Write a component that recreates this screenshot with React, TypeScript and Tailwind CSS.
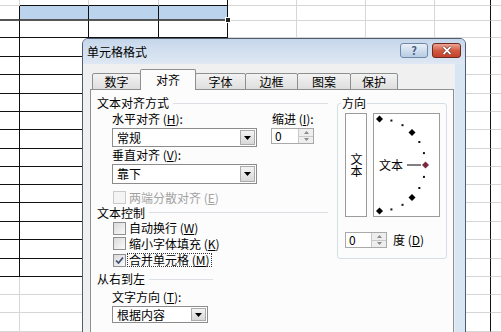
import type { ReactNode } from 'react';

const font = "font-['Noto_Sans_CJK_SC','Noto_Sans',sans-serif]";

// spreadsheet grid behind the dialog
const colW = ['w-[20px]', 'w-[69px]', 'w-[70px]', 'w-[69px]', 'w-[69px]', 'w-[69px]', 'w-[69px]', 'w-[56px]', 'w-[20px]'];
const rowH = [
  'h-[6px]', 'h-[15px]', 'h-[17px]', 'h-[19px]', 'h-[18px]', 'h-[19px]', 'h-[18px]', 'h-[18px]', 'h-[19px]', 'h-[18px]',
  'h-[18px]', 'h-[18px]', 'h-[19px]', 'h-[18px]', 'h-[19px]', 'h-[18px]', 'h-[18px]', 'h-[18px]', 'h-[19px]', 'h-[18px]',
];

function Sheet() {
  return (
    <div className="flex flex-col">
      {rowH.map((h, r) => (
        <div key={r} className={`flex ${h}`}>
          {colW.map((w, c) => {
            const boxed = r >= 1 && r <= 15 && c <= 3;
            const bottom =
              r === 1 && c <= 3
                ? 'border-b-2 border-b-[#555555]'
                : boxed || (r === 0 && c >= 1 && c <= 3)
                  ? 'border-b border-b-[#111111]'
                  : 'border-b border-b-[#d6d6d6]';
            const right = boxed || c === 7 || (c === 3 && r === 0) ? 'border-r border-r-[#111111]' : 'border-r border-r-[#d6d6d6]';
            const fill = r === 1 && c >= 1 && c <= 3 ? 'bg-[#bcd3ee]' : 'bg-white';
            return <div key={c} className={`shrink-0 ${w} ${bottom} ${right} ${fill}`} />;
          })}
        </div>
      ))}
    </div>
  );
}

function DropArrow() {
  return (
    <svg width="7" height="4" viewBox="0 0 7 4">
      <path d="M0 0H7L3.5 4Z" fill="#000" />
    </svg>
  );
}

function Select({ width, height, text }: { width: string; height: string; text: string }) {
  return (
    <div className={`flex ${width} ${height} items-stretch border border-[#8c8c8c] bg-white`}>
      <span className="flex-1 pl-[4px] text-[12px] leading-[16px] self-center">{text}</span>
      <div className="m-[1px] flex w-[15px] items-center justify-center border border-[#ababab] bg-gradient-to-b from-[#f4f4f4] to-[#d8d8d8]">
        <DropArrow />
      </div>
    </div>
  );
}

function Spinner({ width }: { width: string }) {
  return (
    <div className={`flex ${width} h-[16px] items-stretch border border-[#a9a9a9] bg-white`}>
      <span className="flex-1 pl-[3px] text-[12px] leading-[14px]">0</span>
      <div className="flex w-[15px] flex-col border-l border-[#c8c8c8] bg-[#eeeeee]">
        <div className="flex flex-1 items-center justify-center border-b border-[#c8c8c8]">
          <svg width="5" height="3" viewBox="0 0 5 3">
            <path d="M0 3H5L2.5 0Z" fill="#8a8a8a" />
          </svg>
        </div>
        <div className="flex flex-1 items-center justify-center">
          <svg width="5" height="3" viewBox="0 0 5 3">
            <path d="M0 0H5L2.5 3Z" fill="#8a8a8a" />
          </svg>
        </div>
      </div>
    </div>
  );
}

function Checkbox({ checked, disabled, focus, children }: { checked?: boolean; disabled?: boolean; focus?: boolean; children: ReactNode }) {
  return (
    <div className="flex items-center pl-[1px]">
      <div
        className={`flex h-[13px] w-[13px] items-center justify-center border ${
          disabled ? 'border-[#cacaca] bg-[#f4f4f4]' : 'border-[#8f8f8f] bg-gradient-to-br from-[#dadada] to-[#fafafa]'
        }`}
      >
        {checked && (
          <svg width="11" height="11" viewBox="0 0 11 11">
            <path d="M2 5.5L4.5 8L9 2.5" fill="none" stroke="#3d4d70" strokeWidth="1.7" />
          </svg>
        )}
      </div>
      <span
        className={`ml-[1px] border px-[1px] text-[12px] leading-[12px] ${focus ? 'border-dotted border-[#333333]' : 'border-transparent'} ${
          disabled ? 'text-[#a3a3a3]' : 'text-black'
        }`}
      >
        {children}
      </span>
    </div>
  );
}

function Heading({ text, lineRight, height }: { text: string; lineRight: string; height: string }) {
  return (
    <div className={`flex ${height} items-center`}>
      <span className="text-[12px] leading-[14px]">{text}</span>
      <div className={`ml-[4px] h-px flex-1 bg-[#dcdfe3] ${lineRight}`} />
    </div>
  );
}

function Key({ k }: { k: string }) {
  return (
    <>
      {' ('}
      <u>{k}</u>
      {')'}
    </>
  );
}

// semicircle orientation dial
function Dial() {
  const cx = 5.5;
  const cy = 51;
  const r = 46;
  const dots = [75, 60, 30, 15, -15, -30, -60, -75];
  const diamonds = [90, 45, -45, -90];
  const pt = (a: number) => [cx + r * Math.cos((a * Math.PI) / 180), cy - r * Math.sin((a * Math.PI) / 180)];
  return (
    <svg width="65" height="102" viewBox="0 0 65 102">
      {dots.map((a) => {
        const [x, y] = pt(a);
        return <rect key={a} x={x - 1} y={y - 1} width="2" height="2" fill="#111" />;
      })}
      {diamonds.map((a) => {
        const [x, y] = pt(a);
        return <path key={a} d={`M${x} ${y - 3.5}L${x + 3.5} ${y}L${x} ${y + 3.5}L${x - 3.5} ${y}Z`} fill="#000" />;
      })}
      <path d="M51.5 47.5L55 51L51.5 54.5L48 51Z" fill="#7a2a3c" />
      <line x1="33" y1="51" x2="47" y2="51" stroke="#000" strokeWidth="1" />
      <text x="5" y="55.5" fontSize="12" fontFamily="'Noto Sans CJK SC', sans-serif" fill="#000">
        文本
      </text>
    </svg>
  );
}

const tabs = [
  { label: '数字', w: 'w-[49px]' },
  { label: '对齐', w: 'w-[56px]', active: true },
  { label: '字体', w: 'w-[51px]' },
  { label: '边框', w: 'w-[53px]' },
  { label: '图案', w: 'w-[54px]' },
  { label: '保护', w: 'w-[48px]' },
];

function Dialog() {
  return (
    <div className={`absolute left-[82px] top-[38px] flex h-[300px] w-[384px] flex-col rounded-t-[6px] border border-[#4e5d70] bg-[#d8e5f3] ${font} text-black`}>
      {/* title bar */}
      <div className="flex h-[25px] shrink-0 items-start justify-between rounded-t-[5px] bg-gradient-to-b from-[#c6d7eb] to-[#dfe8f3]">
        <span className="pl-[4px] pt-[6px] text-[12px] leading-[14px]">单元格格式</span>
        <div className="flex gap-[4px] pr-[4px] pt-[4px]">
          <div className="flex h-[15px] w-[28px] items-center justify-center rounded-[3px] border border-[#6f88aa] bg-gradient-to-b from-[#e9f0f8] to-[#b7cbe3] text-[11px] font-bold leading-none text-[#475c78]">
            ?
          </div>
          <div className="flex h-[15px] w-[29px] items-center justify-center rounded-[3px] border border-[#6e2a20] bg-gradient-to-b from-[#e9a595] via-[#d35a42] to-[#c2412a]">
            <svg width="10" height="9" viewBox="0 0 10 9">
              <path d="M1.5 1L8.5 8M8.5 1L1.5 8" stroke="#5a1a12" strokeWidth="3" />
              <path d="M1.5 1L8.5 8M8.5 1L1.5 8" stroke="#fff" strokeWidth="1.8" />
            </svg>
          </div>
        </div>
      </div>

      {/* client area */}
      <div className="mr-[10px] flex flex-1 flex-col bg-[#f0f0f0] pl-[7px] pr-[1px] pt-[5px]">
        <div className="relative z-10 -mb-px ml-[2px] flex h-[21px] items-end">
          {tabs.map((t, i) =>
            t.active ? (
              <div
                key={t.label}
                className={`${t.w} ${i > 0 ? '-ml-px' : ''} relative z-10 flex h-[21px] items-center justify-center rounded-t-[2px] border-x border-t border-[#8e8f8f] bg-[#fcfcfc] pb-[1px] text-[12px] leading-[14px]`}
              >
                {t.label}
              </div>
            ) : (
              <div
                key={t.label}
                className={`${t.w} ${i > 0 ? '-ml-px' : ''} flex h-[17px] items-center justify-center rounded-t-[2px] border border-[#8e8f8f] bg-gradient-to-b from-[#f3f3f3] to-[#dedede] text-[12px] leading-[14px]`}
              >
                {t.label}
              </div>
            ),
          )}
        </div>

        <div className="flex flex-1 border border-[#8e8f8f] bg-[#fcfcfc]">
          {/* left column */}
          <div className="flex w-[246px] flex-col pl-[6px] pt-[5px]">
            <Heading text="文本对齐方式" height="h-[16px]" lineRight="mr-[9px]" />
            <div className="flex h-[16px] items-center pl-[15px] text-[12px] leading-[14px]">
              <span className="w-[160px]">
                水平对齐
                <Key k="H" />:
              </span>
              <span>
                缩进
                <Key k="I" />:
              </span>
            </div>
            <div className="mt-[1px] flex items-start gap-[14px] pl-[15px]">
              <Select width="w-[145px]" height="h-[19px]" text="常规" />
              <Spinner width="w-[43px]" />
            </div>
            <div className="flex h-[15px] items-center pl-[15px] text-[12px] leading-[14px]">
              <span>
                垂直对齐
                <Key k="V" />:
              </span>
            </div>
            <div className="mt-[2px] pl-[15px]">
              <Select width="w-[145px]" height="h-[20px]" text="靠下" />
            </div>
            <div className="mt-[6px] flex h-[15px] items-center pl-[15px]">
              <Checkbox disabled>
                两端分散对齐
                <Key k="E" />
              </Checkbox>
            </div>
            <Heading text="文本控制" height="h-[15px]" lineRight="mr-[9px]" />
            <div className="flex h-[16px] items-center pl-[15px]">
              <Checkbox>
                自动换行
                <Key k="W" />
              </Checkbox>
            </div>
            <div className="flex h-[15px] items-center pl-[15px]">
              <Checkbox>
                缩小字体填充
                <Key k="K" />
              </Checkbox>
            </div>
            <div className="flex h-[18px] items-center pl-[15px]">
              <Checkbox checked focus>
                合并单元格
                <Key k="M" />
              </Checkbox>
            </div>
            <div className="mt-[1px]">
              <Heading text="从右到左" height="h-[18px]" lineRight="mr-[124px]" />
            </div>
            <div className="flex h-[18px] items-center pl-[15px] text-[12px] leading-[14px]">
              <span>
                文字方向
                <Key k="T" />:
              </span>
            </div>
            <div className="pl-[15px]">
              <Select width="w-[96px]" height="h-[17px]" text="根据内容" />
            </div>
          </div>

          {/* orientation group */}
          <fieldset className="mt-[6px] w-[110px] self-start rounded-[3px] border border-[#d5dde5] p-0 pb-[10px]">
            <legend className="ml-[3px] px-[1px] text-[12px] leading-[14px]">方向</legend>
            <div className="mt-[3px] flex gap-[6px] pl-[7px]">
              <div className="flex h-[104px] w-[22px] items-center justify-center border border-[#9c9c9c] bg-white">
                <span className="text-[12px] leading-[14px] [writing-mode:vertical-rl]">文本</span>
              </div>
              <div className="h-[104px] w-[67px] border border-[#9c9c9c] bg-white">
                <Dial />
              </div>
            </div>
            <div className="mt-[15px] flex items-center pl-[7px]">
              <Spinner width="w-[42px]" />
              <span className="ml-[6px] text-[12px] leading-[14px]">
                度
                <Key k="D" />
              </span>
            </div>
          </fieldset>
        </div>
      </div>
    </div>
  );
}

export default function App() {
  return (
    <div className="relative h-[332px] w-[501px] overflow-hidden bg-white">
      <Sheet />
      {/* fill handle of the selection */}
      <div className="absolute left-[225px] top-[17px] h-[6px] w-[6px] border border-white bg-[#222222]" />
      <Dialog />
    </div>
  );
}
